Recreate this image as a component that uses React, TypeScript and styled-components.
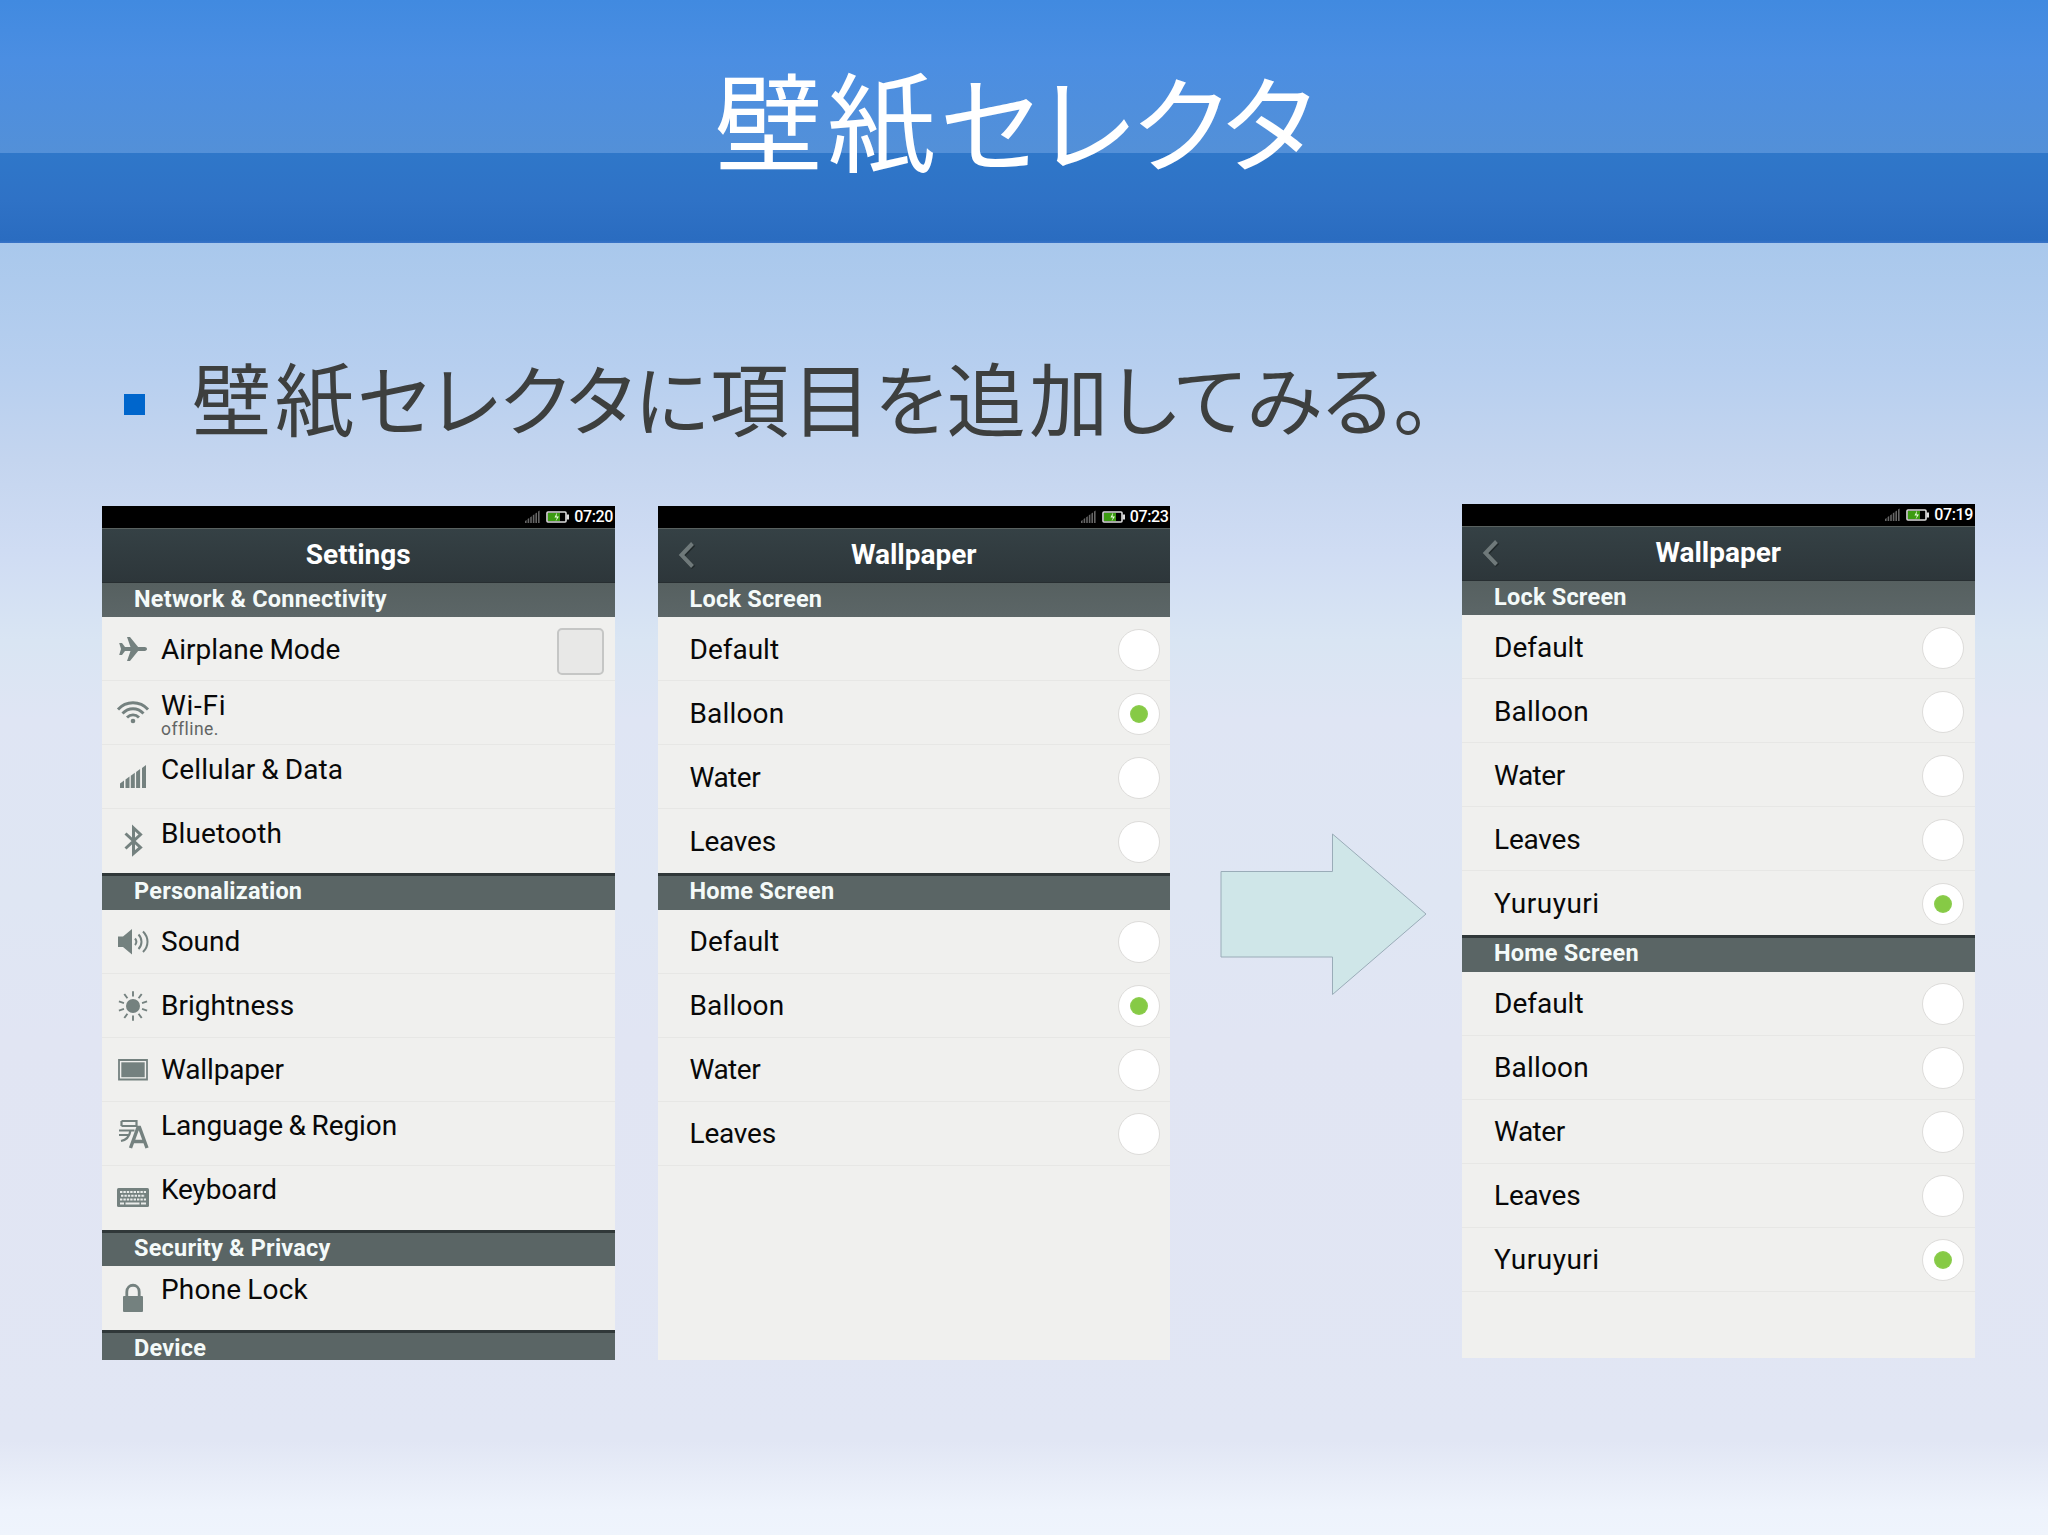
import React from 'react';
import styled, { createGlobalStyle } from 'styled-components';

const Global = createGlobalStyle`
  *{box-sizing:border-box}
  html,body{margin:0;padding:0;background:#e2e6f4}
`;

const Slide = styled.div`
  width:2048px;height:1535px;overflow:hidden;display:flex;flex-direction:column;
  font-family:Roboto,"Noto Sans CJK JP",sans-serif;
  background:linear-gradient(180deg,#a9c8ec 243px,#b7cfef 370px,#c4d5ef 460px,#cfdcf3 550px,#d9e5f3 640px,#dfe5f4 720px,#dfe6f3 900px,#e1e5f3 1040px,#e1e6f4 1440px,#eef3fc 1510px,#eff4fc 1535px);
`;
const TitleBar = styled.header`
  height:243px;flex:none;display:flex;justify-content:center;align-items:flex-start;padding:38px 19px 0 0;
  background:linear-gradient(180deg,#418ae0 0,#4b8ee2 60px,#5390d8 153px,#2f77c9 153px,#2f72c6 200px,#2a6cc0 240px,#3a74c8 243px);
`;
const Title = styled.h1`
  margin:0;font:400 105px/160px "Noto Sans CJK JP",sans-serif;color:#fff;white-space:nowrap;
  font-feature-settings:"palt";
`;
const Bullet = styled.div`
  height:261px;flex:none;padding:103px 0 0 124px;display:flex;align-items:flex-start;
`;
const Square = styled.span`width:21px;height:21px;background:#06c;margin-top:48px;flex:none;`;
const BulletText = styled.p`
  margin:-4px 0 0 47px;font:400 77px/110px "Noto Sans CJK JP",sans-serif;color:#3d3f3e;white-space:nowrap;
  font-feature-settings:"palt";
`;
const Run = styled.span<{ $kanji: boolean; $kana: number }>`
  font-size:${p => (p.$kanji ? 1.03 : 1)}em;letter-spacing:${p => (p.$kanji ? 0.042 : p.$kana)}em;line-height:1;
`;
const Stage = styled.main`display:flex;align-items:flex-start;padding-left:102px;`;
const Phone = styled.section<{ $left?: number; $top?: number }>`
  width:512.5px;height:854px;flex:none;overflow:hidden;background:#f0f0ee;
  margin-left:${p => p.$left || 0}px;margin-top:${p => p.$top || 0}px;
`;
const Status = styled.div`
  height:22px;background:#000;color:#fff;display:flex;align-items:center;justify-content:flex-end;gap:5px;padding-right:1.500px;
  font-size:16px;font-weight:500;line-height:20px;letter-spacing:-.35px;
`;
const Clock = styled.span`margin-top:-1px;`;
const AppBar = styled.div`
  height:55.3px;display:grid;grid-template-columns:60px 1fr 60px;align-items:center;
  background:linear-gradient(180deg,#354145,#2d363a);border-top:1px solid #59615f;border-bottom:1px solid #272e31;
`;
const Heading = styled.h2`margin:-2px 0 0;text-align:center;color:#fff;font-size:28px;line-height:32px;font-weight:700;`;
const Back = styled.svg`width:60px;height:52px;display:block;`;
const Section = styled.h3<{ $first?: boolean }>`
  margin:0;height:${p => (p.$first ? 34 : 36.3)}px;padding-left:32px;
  background:${p => (p.$first ? 'linear-gradient(180deg,#566060,#5c6667)' : '#5a6565')};
  ${p => (p.$first ? '' : 'border-top:3px solid #303839;padding-top:2px;')}
  color:#f4faf9;font-size:23.5px;line-height:${p => (p.$first ? 32 : 26)}px;font-weight:700;white-space:nowrap;letter-spacing:.22px;
`;
const Row = styled.div<{ $last?: boolean }>`
  height:64px;display:flex;align-items:stretch;border-bottom:1px solid ${p => (p.$last ? 'transparent' : '#e7e7e5')};
  padding-right:10.5px;
`;
const IconCell = styled.div`
  width:59px;display:flex;justify-content:center;align-items:center;padding:1px 0 0 2px;
`;
const Icon = styled.svg`width:34px;height:34px;display:block;`;
const Labels = styled.div<{ $up?: boolean; $indent?: boolean }>`
  flex:1;display:flex;flex-direction:column;padding-top:${p => (p.$up ? 8.4 : 16.4)}px;padding-left:${p => (p.$indent ? 32 : 0)}px;
`;
const Label = styled.span<{ $track?: number }>`
  font-size:28px;line-height:32px;color:#080808;white-space:nowrap;word-spacing:-1.2px;letter-spacing:${p => p.$track || 0}px;
`;
const Sub = styled.span`font-size:17.500px;line-height:16px;color:#626564;letter-spacing:.45px;margin-top:-1px;`;
const Radio = styled.span`
  width:42px;height:42px;border-radius:50%;background:#fff;border:1.5px solid #dddcda;align-self:center;margin-top:2px;
  display:flex;align-items:center;justify-content:center;
`;
const Dot = styled.i`width:18px;height:18px;border-radius:50%;background:radial-gradient(circle,#86ca45 55%,#9bd468);`;
const Check = styled.span`width:47px;height:47px;border-radius:5px;background:#e8e8e7;border:2px solid #c5c6c5;align-self:center;margin-top:5px;`;
const Arrow = styled.svg`width:208px;height:164px;flex:none;margin:329px 0 0 50px;display:block;overflow:visible;`;

const G = '#74817f';

const icons: Record<string, React.ReactNode> = {
  plane: <path fill={G} d="M31 17c0 1-1 1.900-2.300 1.900h-6.600L14 29h-3l3.500-10.100H9L6 23H3.200L5 17 3.200 11H6l3 4.100h5.500L11 5h3l8.100 10.100h6.600C30 15.100 31 16 31 17z" />,
  wifi: <g fill="none" stroke={G} strokeWidth="2.900"><path d="M2 13.500C10 4.500 24 4.500 32 13.500M6.500 17.500c6-6.300 15-6.300 21 0M11 21.500c3.500-3.500 8.500-3.500 12 0" /><circle cx="17" cy="25" r="2.300" fill={G} stroke="none" /></g>,
  signal: <path fill={G} d="M4 23.500l4-3V28H4zM9.500 19.600l4-3V28h-4zM14.800 15.700l4-3V28h-4zM20.100 12l4-3v19h-4zM26 8l4-3v23h-4z" />,
  bluetooth: <path fill="none" stroke={G} strokeWidth="3" d="M9.500 9.500l15 14-7 6V4l7 6.500-15 14" />,
  sound: <g fill="none" stroke={G} strokeWidth="2"><path fill={G} stroke="none" d="M2 11.500h5L16 4v25.500L7 22H2z" /><path d="M19 13.500c1.700 2 1.700 4.500 0 6.500M22.500 9.500c4 4 4 10.500 0 14.500M27 6.500c6 6 6 14.500 0 20.500" /></g>,
  sun: <g stroke={G} strokeWidth="1.900" fill={G}><circle cx="17" cy="17" r="7" stroke="none" />{Array.from({ length: 10 }, (_, i) => <path key={i} d="M17 2.200v5.300" transform={`rotate(${i * 36} 17 17)`} />)}</g>,
  picture: <g><path fill="none" stroke={G} strokeWidth="1.800" d="M3 7h28v19.500H3z" /><path fill={G} d="M5.300 9.300h23.400v14.900H5.300z" /></g>,
  language: <g fill="none" stroke={G} strokeWidth="2.200"><path d="M5.500 4h15v5H5.500M5.500 4v5M3 13.500h15.500M3 18h10.500M14.500 13.500c-1 6-4 9.500-9.500 10.500" /><path strokeWidth="3.400" d="M14.500 31l7.500-20.500h1.500L31 31M17 24.500h11.500" /></g>,
  keyboard: <g><rect x="1" y="7" width="32" height="19" rx="1.500" fill={G} /><path stroke="#e9ecea" strokeWidth="2" strokeDasharray="2.400 1" d="M4 11h26M5 14.700h24M4 18.400h26" /><path stroke="#e9ecea" strokeWidth="2" d="M4 22.500h4M9.500 22.500h14M25 22.500h5" /></g>,
  lock: <g><rect x="7" y="15" width="20" height="16" rx="1" fill={G} /><path fill="none" stroke={G} strokeWidth="2.800" d="M10.800 16v-5c0-9 12.400-9 12.400 0v5" /></g>,
};

const tracking: Record<string, number> = { 'Wi-Fi': 0.7, Water: -0.5, Leaves: -0.2, Yuruyuri: 0.5, Bluetooth: 0.12, Wallpaper: -0.15, Keyboard: -0.15, Balloon: 0.15, 'Language & Region': -0.1, 'Cellular & Data': 0.1, 'Phone Lock': 0.2 };

const StatusIcons = () => (
  <>
    <svg width="16" height="14" viewBox="0 0 16 14">
      {[0, 1, 2, 3, 4, 5].map(i => <path key={i} d={`M${i * 2.6} ${11 - i * 1.9}V13h1.600V${10 - i * 1.9}z`} fill="#666" />)}
    </svg>
    <svg width="23" height="12" viewBox="0 0 23 12">
      <rect x="1" y="1" width="19" height="10" rx="1" fill="#000" stroke="#ddd" strokeWidth="1.600" />
      <rect x="2" y="2" width="12" height="8" fill="#3c9b12" />
      <path d="M20.500 3.500H23v5h-2.500z" fill="#ddd" />
      <path d="M11 1.500L8.500 6.500H11L9.500 10.500 13 5.500h-2.500z" fill="#eaffdc" />
    </svg>
  </>
);

const Top = ({ time, title, back }: { time: string; title: string; back?: boolean }) => (
  <>
    <Status><StatusIcons /><Clock>{time}</Clock></Status>
    <AppBar>
      {back ? <Back viewBox="0 0 60 52"><path d="M35.500 14.500L24.500 26l11 11.500" fill="none" stroke="#20282a" strokeWidth="4.500" /><path d="M34.500 13.500L23.500 25l11 11.500" fill="none" stroke="#6f797a" strokeWidth="4" /></Back> : <span />}
      <Heading>{title}</Heading>
      <span />
    </AppBar>
  </>
);

const Item = ({ icon, label, sub, up, last, check }: { icon: string; label: string; sub?: string; up?: boolean; last?: boolean; check?: boolean }) => (
  <Row $last={last}>
    <IconCell><Icon viewBox="0 0 34 34">{icons[icon]}</Icon></IconCell>
    <Labels $up={up}><Label $track={tracking[label]}>{label}</Label>{sub && <Sub>{sub}</Sub>}</Labels>
    {check && <Check />}
  </Row>
);

const Choices = ({ names, selected, open }: { names: string[]; selected: string; open?: boolean }) => (
  <>
    {names.map((n, i) => (
      <Row key={n} $last={!open && i === names.length - 1}>
        <Labels $indent><Label $track={tracking[n]}>{n}</Label></Labels>
        <Radio>{n === selected && <Dot />}</Radio>
      </Row>
    ))}
  </>
);

/* Kanji are set slightly larger and looser than the proportional kana between them. */
const Japanese = ({ text, kana = 0 }: { text: string; kana?: number }) => (
  <>
    {(text.match(/[一-龠]+|[^一-龠]+/g) || []).map((part, i) => (
      <Run key={i} $kanji={/[一-龠]/.test(part)} $kana={kana}>{part}</Run>
    ))}
  </>
);

const base = ['Default', 'Balloon', 'Water', 'Leaves'];
const extended = [...base, 'Yuruyuri'];

const WallpaperPhone = ({ time, names, selected, left, top }: { time: string; names: string[]; selected: string; left: number; top?: number }) => (
  <Phone $left={left} $top={top}>
    <Top time={time} title="Wallpaper" back />
    <Section $first>Lock Screen</Section>
    <Choices names={names} selected={selected} />
    <Section>Home Screen</Section>
    <Choices names={names} selected={selected} open />
  </Phone>
);

export default function App() {
  return (
    <Slide>
      <Global />
      <TitleBar><Title><Japanese text="壁紙セレクタ" /></Title></TitleBar>
      <Bullet><Square /><BulletText><Japanese text="壁紙セレクタに項目を追加してみる。" kana={0.009} /></BulletText></Bullet>
      <Stage>
        <Phone $top={2}>
          <Top time="07:20" title="Settings" />
          <Section $first>Network &amp; Connectivity</Section>
          <Item icon="plane" label="Airplane Mode" check />
          <Item icon="wifi" label="Wi-Fi" sub="offline." up />
          <Item icon="signal" label="Cellular &amp; Data" up />
          <Item icon="bluetooth" label="Bluetooth" up last />
          <Section>Personalization</Section>
          <Item icon="sound" label="Sound" />
          <Item icon="sun" label="Brightness" />
          <Item icon="picture" label="Wallpaper" />
          <Item icon="language" label="Language &amp; Region" up />
          <Item icon="keyboard" label="Keyboard" up last />
          <Section>Security &amp; Privacy</Section>
          <Item icon="lock" label="Phone Lock" up last />
          <Section>Device</Section>
        </Phone>
        <WallpaperPhone time="07:23" names={base} selected="Balloon" left={43} top={2} />
        <Arrow viewBox="0 0 208 164"><path d="M1 38.500h111.500V1L206 81 112.500 161.500V124H1z" fill="#cfe6e8" stroke="#9aacb8" strokeWidth="1" /></Arrow>
        <WallpaperPhone time="07:19" names={extended} selected="Yuruyuri" left={34} />
      </Stage>
    </Slide>
  );
}
